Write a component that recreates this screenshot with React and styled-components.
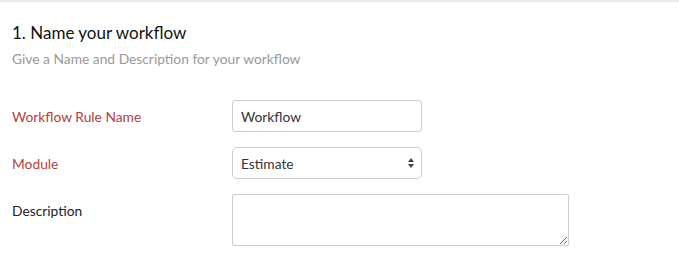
import React from "react";
import styled, { createGlobalStyle } from "styled-components";

const Global = createGlobalStyle`
  html, body { margin: 0; padding: 0; background: #fff; }
  body { font-family: Lato, "Open Sans", sans-serif; color: #222; }
`;

const Page = styled.div`
  border-top: 2px solid #ebebeb;
  padding: 20px 12px 0 12px;
`;

const Title = styled.h2`
  margin: 0;
  font-size: 17px;
  font-weight: 400;
  color: #111;
  line-height: 22px;
`;

const Subtitle = styled.p`
  margin: 6px 0 0;
  font-size: 13.8px;
  color: #999;
  line-height: 18px;
`;

const Form = styled.div`
  margin-top: 32px;
  display: flex;
  flex-direction: column;
  gap: 15px;
`;

const Row = styled.div`
  display: grid;
  grid-template-columns: 220px auto;
  align-items: ${(p) => (p.$top ? "start" : "center")};
`;

const Label = styled.label`
  font-size: 13.8px;
  color: ${(p) => (p.$required ? "#b5403a" : "#222")};
  padding-top: ${(p) => (p.$top ? "8px" : "0")};
`;

const Input = styled.input`
  box-sizing: border-box;
  width: 190px;
  height: 32px;
  border: 1px solid #ccc;
  border-radius: 3px;
  padding: 0 8px;
  font-family: inherit;
  font-size: 13.8px;
  color: #333;
  outline: none;
`;

const SelectWrap = styled.div`
  position: relative;
  width: 190px;
`;

const Select = styled.select`
  box-sizing: border-box;
  appearance: none;
  width: 190px;
  height: 32px;
  border: 1px solid #ccc;
  border-radius: 5px;
  padding: 0 8px;
  background: #fff;
  font-family: inherit;
  font-size: 13.8px;
  color: #333;
  outline: none;
`;

const Arrows = styled.svg`
  position: absolute;
  right: 8px;
  top: 11px;
  pointer-events: none;
`;

const TextArea = styled.textarea`
  box-sizing: border-box;
  width: 337px;
  height: 52px;
  border: 1px solid #ccc;
  border-radius: 2px;
  padding: 6px 8px;
  font-family: inherit;
  font-size: 13.8px;
  outline: none;
  display: block;
`;

export default function App() {
  return (
    <>
      <Global />
      <Page>
        <Title>1. Name your workflow</Title>
        <Subtitle>Give a Name and Description for your workflow</Subtitle>
        <Form>
          <Row>
            <Label $required>Workflow Rule Name</Label>
            <Input defaultValue="Workflow" />
          </Row>
          <Row>
            <Label $required>Module</Label>
            <SelectWrap>
              <Select defaultValue="Estimate">
                <option>Estimate</option>
              </Select>
              <Arrows width="6" height="10" viewBox="0 0 6 10">
                <path d="M3 0 L6 4 H0 Z" fill="#444" />
                <path d="M3 10 L6 6 H0 Z" fill="#444" />
              </Arrows>
            </SelectWrap>
          </Row>
          <Row $top>
            <Label $top>Description</Label>
            <TextArea />
          </Row>
        </Form>
      </Page>
    </>
  );
}
